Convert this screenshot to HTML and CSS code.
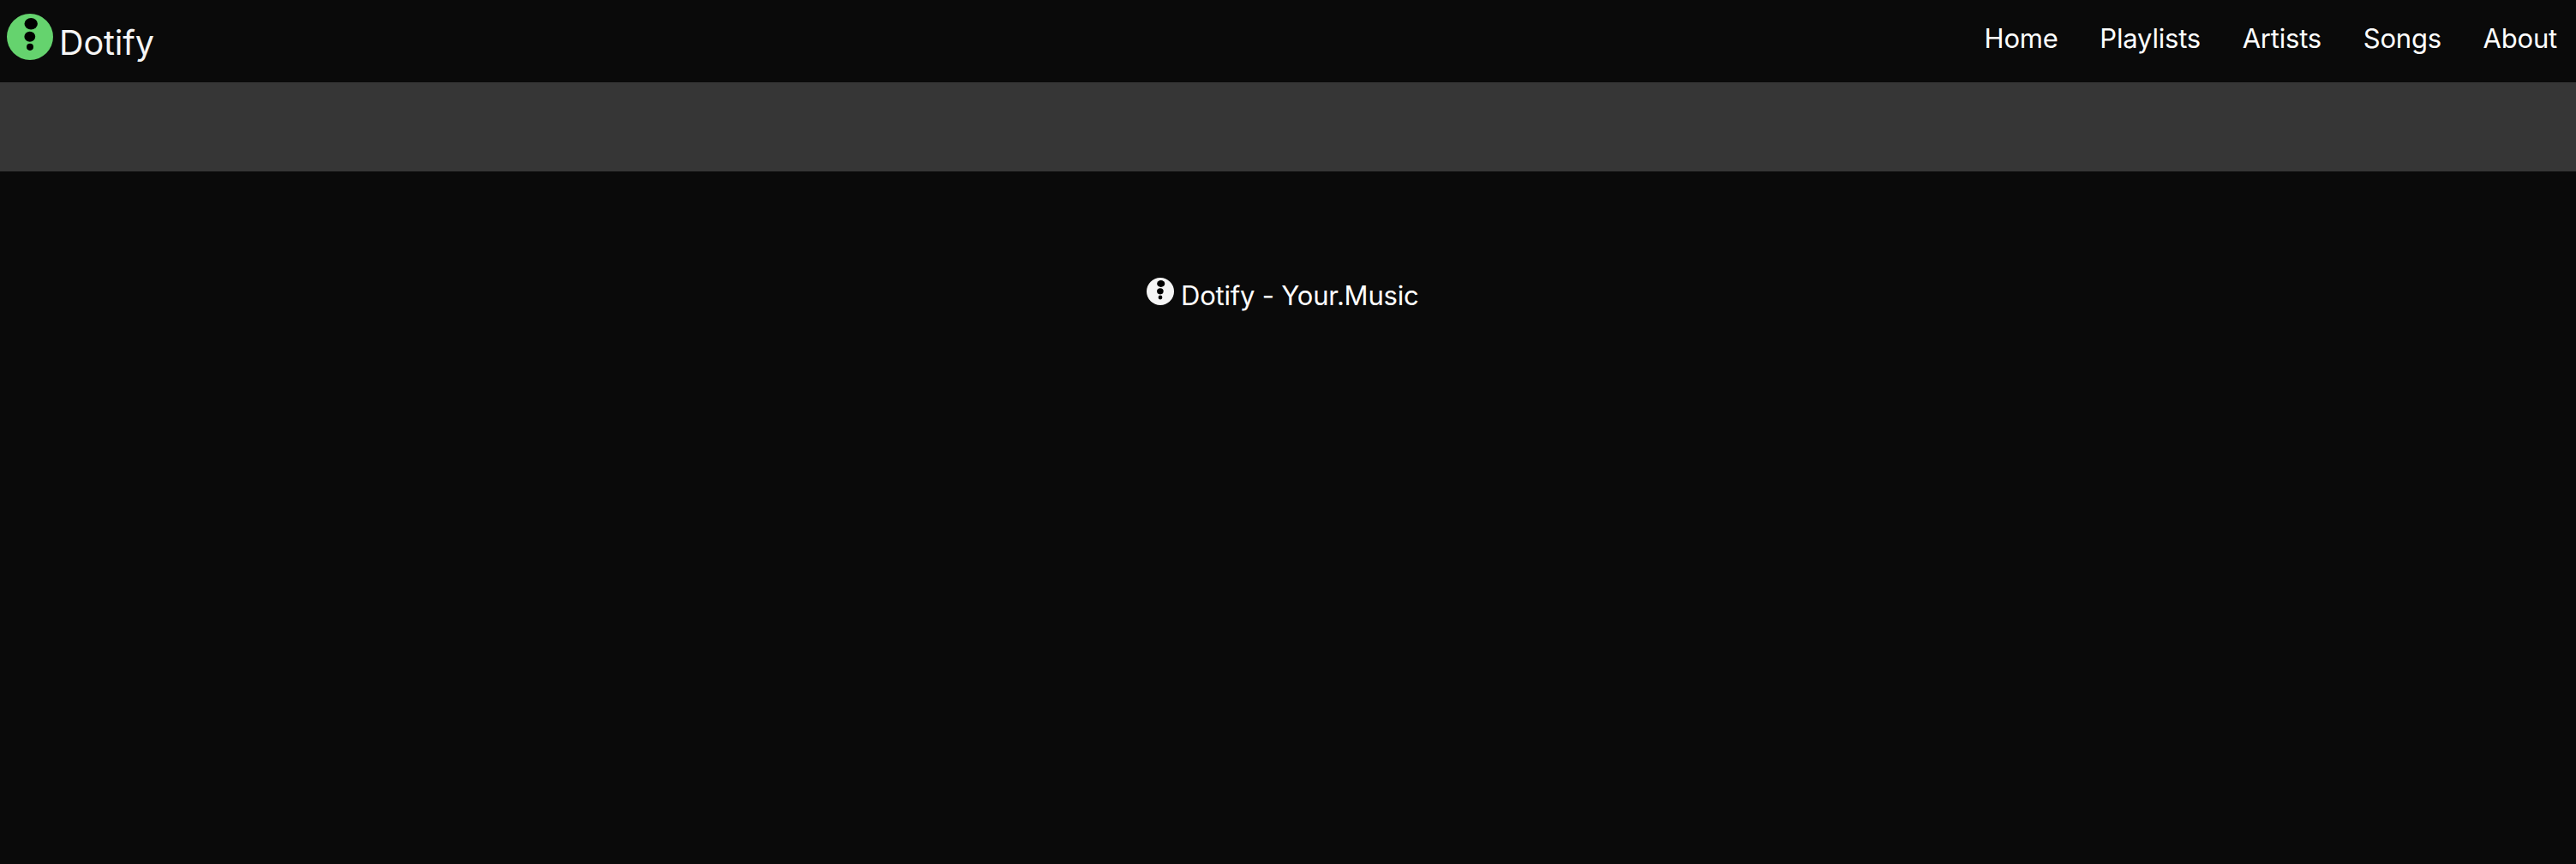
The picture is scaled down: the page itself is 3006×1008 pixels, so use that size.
FILE: index.html
```html
<!DOCTYPE html>
<html lang="en">
<head>
<meta charset="utf-8">
<title>Dotify</title>
<link rel="stylesheet" href="styles.css">
</head>
<body>
<header class="navbar">
  <a class="brand">
    <svg class="brand-logo" viewBox="0 0 54 54"><circle cx="27" cy="27" r="27" fill="#65d36e"/><g fill="#000"><ellipse cx="28.2" cy="11.8" rx="7.7" ry="6.7"/><ellipse cx="26.8" cy="26.7" rx="6.4" ry="6"/><ellipse cx="27" cy="38.8" rx="4" ry="4.1"/></g></svg>
    <span class="brand-name">Dotify</span>
  </a>
  <nav class="menu">
    <a class="item">Home</a>
    <a class="item">Playlists</a>
    <a class="item">Artists</a>
    <a class="item">Songs</a>
    <a class="item">About</a>
  </nav>
</header>
<main class="banner"></main>
<footer class="footer">
  <svg class="footer-logo" viewBox="0 0 54 54"><circle cx="27" cy="27" r="27" fill="#f5f5f5"/><g fill="#000"><ellipse cx="28.2" cy="11.8" rx="7.7" ry="6.7"/><ellipse cx="26.8" cy="26.7" rx="6.4" ry="6"/><ellipse cx="27" cy="38.8" rx="4" ry="4.1"/></g></svg>
  <span class="footer-text">Dotify - Your.Music</span>
</footer>
</body>
</html>
```
FILE: styles.css
```css
* { box-sizing: border-box; }
body {
  margin: 0;
  min-height: 1008px;
  background: #0a0a0a;
  color: #fff;
  font-family: Inter, "Liberation Sans", sans-serif;
  font-size: 31px;
  font-weight: 400;
  letter-spacing: -0.2px;
}
.navbar { display: flex; justify-content: space-between; height: 96px; }
.brand { display: flex; padding: 16px 0 0 8px; gap: 7px; }
.brand-logo { width: 54px; height: 54px; }
.brand-name { padding-top: 10px; font-size: 39.5px; line-height: 48px; letter-spacing: -0.1px; color: #f5f5f5; }
.menu { display: flex; height: 90px; align-items: center; gap: 0.7px; }
.item { padding: 0 24px; line-height: 48px; }
.item:last-child { padding-right: 22px; }
.banner { height: 104px; background: #363636; }
.footer { display: flex; justify-content: center; padding: 120px 12.5px 0 0; gap: 8px; }
.footer-logo { width: 32px; height: 32px; margin-top: 4px; }
.footer-text { line-height: 50px; }
```
